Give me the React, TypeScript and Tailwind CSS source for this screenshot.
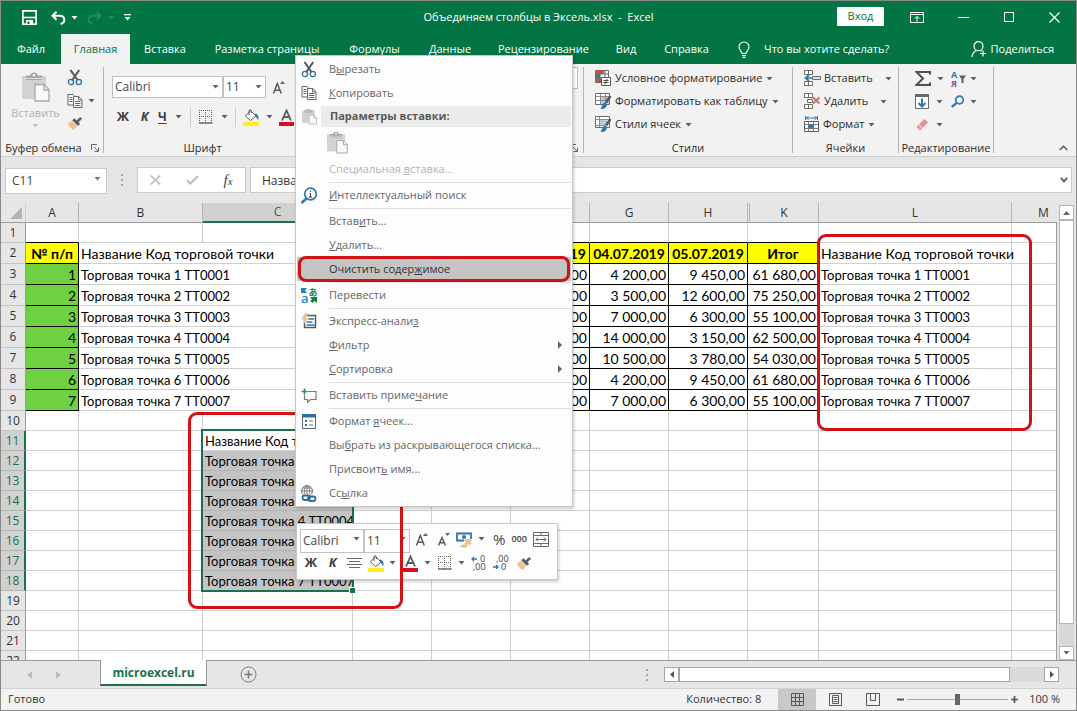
import React from "react";

const Caret = ({ className = "text-[#5f5f5f]" }: { className?: string }) => (
  <svg width="7" height="4" viewBox="0 0 7 4" className={"shrink-0 " + className} fill="currentColor" aria-hidden="true">
    <path d="M0.5 0h6L3.5 3.6z" />
  </svg>
);

const Scissors = () => (
  <svg width="16" height="17" viewBox="0 0 16 17" fill="none" aria-hidden="true">
    <path d="M3.500 1 10.800 11.500M12.200 1 5 11.500" stroke="#5a5a5a" strokeWidth="2.100" />
    <circle cx="4" cy="13" r="2.600" stroke="#2e75a0" strokeWidth="1.300" />
    <circle cx="11.800" cy="13" r="2.600" stroke="#2e75a0" strokeWidth="1.300" />
  </svg>
);

const CopyIcon = () => (
  <svg width="16" height="16" viewBox="0 0 16 16" aria-hidden="true">
    <path d="M1 1.500h5l2.500 2.500v8H1z" fill="#fff" stroke="#5a6670" />
    <path d="M2.500 4.500h3M2.500 6.500h3M2.500 8.500h3" stroke="#2e75a0" />
    <path d="M6.500 3.500h5.200l3.300 3.300v7.700H6.500z" fill="#fff" stroke="#5a6670" />
    <path d="M11.500 3.500v3.400h3.400" fill="none" stroke="#5a6670" />
    <path d="M8 8.500h5.500M8 10.500h5.500M8 12.500h5.500" stroke="#2e75a0" />
  </svg>
);

const PasteIcon = ({ width, height }: { width: number; height: number }) => (
  <svg width={width} height={height} viewBox="0 0 28 30" aria-hidden="true">
    <path d="M0 4h24v23H0z" fill="#d3d1d2" />
    <path d="M4 8V3.500h4C8.500 1.500 10 .5 12 .5s3.500 1 4 3h4V8z" fill="#a8a6a7" />
    <circle cx="12" cy="3.300" r="1.300" fill="#f3f2f2" />
    <path d="M4 6.500h16" stroke="#f3f2f2" strokeWidth=".8" />
    <path d="M13 12.500h9l5 5V29H13z" fill="#fbfafb" stroke="#aaa8a9" strokeWidth="1.300" />
    <path d="M22 12.500V18h5" fill="none" stroke="#aaa8a9" strokeWidth="1.300" />
  </svg>
);

const Brush = () => (
  <svg width="16" height="15" viewBox="0 0 17 15" aria-hidden="true">
    <path d="m1 7.500 4-3 5.500 5.500-3 4.500C5.500 14 2 11 1 7.500z" fill="#f3c08a" />
    <path d="M5.500 4 8 2l6 6-2.500 2z" fill="#5a5a5a" />
    <path d="M10.500 4.500 14 1l1.500 1.500L12 6z" fill="#5a5a5a" stroke="#5a5a5a" />
  </svg>
);

const Borders = () => (
  <svg width="14" height="14" viewBox="0 0 14 14" fill="none" stroke="#5f5f5f" aria-hidden="true">
    <path d="M0 .5h13M0 6.500h13M.5 0v13M6.500 0v13M12.500 0v13" strokeDasharray="1 1" />
    <path d="M0 13h13.500" strokeWidth="1.400" />
  </svg>
);

const Bucket = () => (
  <svg width="17" height="17" viewBox="0 0 17 17" aria-hidden="true">
    <path d="M0 13h16v4H0z" fill="#ffee1a" />
    <path d="M7.500 1.500 13 7l-5.500 4.500L2.500 7z" fill="#fff" stroke="#5a5a5a" />
    <path d="M6 6V1.500q1.200-1.500 2.400 0V4" fill="none" stroke="#5a5a5a" />
    <path d="M12 4.500c3 .5 4 3 3.300 6.500-1.500-1-1.500-3-3-3.500z" fill="#2e75a0" />
  </svg>
);

const FontColor = () => (
  <svg width="15" height="17" viewBox="0 0 15 17" aria-hidden="true">
    <path d="M3 11.500 7.500 1.500 12 11.500M4.600 8h5.800" fill="none" stroke="#5a5a5a" strokeWidth="1.800" />
    <path d="M0 13h15v4H0z" fill="#d8101c" />
  </svg>
);

const GrowFont = ({ down = false }: { down?: boolean }) => (
  <svg width="14" height="15" viewBox="0 0 14 15" aria-hidden="true">
    <path d={down ? "M1.500 13.500 5 5.500l3.500 8M3 10.800h4" : "M1.500 13.500 5.300 3.500l4 10M2.900 10.300h5"} fill="none" stroke="#5a5a5a" strokeWidth="1.500" />
    <path d={down ? "M8 1h5l-2.500 3z" : "M8 4h5L10.500 1z"} fill="#2e75a0" />
  </svg>
);

const Launcher = () => (
  <svg width="8" height="8" viewBox="0 0 8 8" fill="none" stroke="#6a6a6a" aria-hidden="true">
    <path d="M.5 6V.5H6M3 3l4 4M7.500 3.500v4h-4" />
  </svg>
);

const CondIcon = () => (
  <svg width="17" height="17" viewBox="0 0 17 17" aria-hidden="true">
    <path d="M.5.5h13v12H.5z" fill="#fff" stroke="#6a6a6a" />
    <path d="M0 0h9v4H0z" fill="#c4563c" /><path d="M0 4h5v4H0z" fill="#3f78a8" /><path d="M0 8h8v4H0z" fill="#c4563c" />
    <path d="M0 4h14M0 8h14M5 0v13M10 0v13" stroke="#6a6a6a" />
    <path d="M6.500 7.500h9v8h-9z" fill="#fff" stroke="#5a5a5a" />
    <path d="M8.500 10.500h5M8.500 12.500h5M12.300 9l-2.600 5.300" stroke="#4a4a4a" fill="none" />
  </svg>
);

const TableIcon = ({ styles = false }: { styles?: boolean }) => (
  <svg width="17" height="17" viewBox="0 0 17 17" aria-hidden="true">
    <path d="M.5.5h14v11H.5z" fill="#fff" stroke="#6a6a6a" />
    <path d={styles ? "M5 4h7v5H5z" : "M6 4h8v7H6z"} fill="#b9cbdb" />
    <path d={styles ? "M.5 3.500h14M4.500 1v10M.5 9.500h9" : "M.5 3.500h14M.5 7.500h14M5.500 1v10M10.500 1v10"} stroke="#8a8a8a" fill="none" />
    <path d="M15.500 3 11 9.500" stroke="#5a5a5a" strokeWidth="2.600" />
    <path d="M5.500 16c1.500-1 1-5.500 4.500-6.500 2.500.5 2.500 3 1 4.700-1.500 1.600-3.500 2.100-5.500 1.800z" fill="#2e78ae" />
  </svg>
);

const CellsIcon = ({ kind }: { kind: "insert" | "delete" }) => (
  <svg width="17" height="17" viewBox="0 0 17 17" aria-hidden="true">
    <path d="M.5.500h8v4h-8zM4.500.5v4M.5 11.500h8v4h-8zM4.500 11.500v4" fill="#fff" stroke="#6a6a6a" />
    {kind === "insert" ? (
      <>
        <path d="M8.500 6.500h8v3h-8z" fill="#d7e3ee" stroke="#6a6a6a" />
        <path d="M8 8H2m3-3L1.500 8 5 11" fill="none" stroke="#2e78ae" strokeWidth="1.700" />
      </>
    ) : (
      <>
        <path d="M3.500 6.500h5v3h-5z" fill="#fff" stroke="#6a6a6a" />
        <path d="m9 4.500 6.500 6M15.500 4.500 9 10.500" stroke="#dd6a56" strokeWidth="1.800" />
      </>
    )}
  </svg>
);

const FormatIcon = () => (
  <svg width="16" height="17" viewBox="0 0 16 17" aria-hidden="true">
    <path d="M1.500 0v4M13.500 0v4M2 2h11M4.500.5 2.500 2l2 1.500M10.500.5l2 1.500-2 1.500" stroke="#2e78ae" fill="none" />
    <path d="M.5 5.500h14v10H.5z" fill="#fff" stroke="#5a5a5a" />
    <path d="M.5 8.500h14M.5 12.500h14M4.500 5.500v10M9.500 5.500v10" stroke="#7a7a7a" />
    <path d="M4.500 8.500h5v4h-5z" fill="#2e78ae" />
  </svg>
);

const Find = () => (
  <svg width="14" height="13" viewBox="0 0 14 13" fill="none" stroke="#2e78ae" aria-hidden="true">
    <circle cx="8.500" cy="5" r="3.800" strokeWidth="1.700" />
    <path d="m5.800 7.800-5 4" strokeWidth="2.300" />
  </svg>
);

const RibbonButton = ({ icon, label, gap = "gap-[4px]" }: { icon: React.ReactNode; label: string; gap?: string }) => (
  <button className={"flex h-[23px] items-center whitespace-nowrap text-[#2b2b2b] " + gap}>
    <span className="flex items-center gap-[3px]">{icon}{label}</span>
    <Caret />
  </button>
);

const GroupLabel = ({ children }: { children: React.ReactNode }) => (
  <div className="mt-auto flex h-[10px] items-center justify-center text-[11px] leading-[10px] whitespace-nowrap text-[#2b2b2b]">{children}</div>
);

const RibbonGroup = ({ className, children }: { className: string; children: React.ReactNode }) => (
  <section className={"my-[3px] flex shrink-0 flex-col border-r border-[#b5b4b4] " + className}>{children}</section>
);

const tabs: [string, string][] = [
  ["Файл", "w-[60px]"],
  ["Главная", "w-[69px]"],
  ["Вставка", "w-[70px]"],
  ["Разметка страницы", "w-[134px]"],
  ["Формулы", "w-[81px]"],
  ["Данные", "w-[70px]"],
  ["Рецензирование", "w-[117px]"],
  ["Вид", "w-[48px]"],
  ["Справка", "w-[73px]"],
];

const TitleBar = () => (
  <header className="grid h-[33px] grid-cols-[1fr_auto_1fr] items-center bg-[#037444] text-white">
    <div className="flex items-center pl-[21px]">
      <button aria-label="Сохранить">
        <svg width="15" height="15" viewBox="0 0 15 15" fill="none" aria-hidden="true">
          <path d="M.9.9h13.200v13.200H.9z" stroke="#fff" strokeWidth="1.700" />
          <path d="M1 7.500h13" stroke="#fff" strokeWidth="1.600" />
          <path d="M4 10h7v4H4z" fill="#fff" /><path d="M5.500 11.500h2v2.500h-2z" fill="#037444" />
        </svg>
      </button>
      <button aria-label="Отменить" className="ml-[14px] flex items-center gap-[5px]">
        <svg width="15" height="14" viewBox="0 0 15 14" fill="none" stroke="#fff" strokeWidth="2" aria-hidden="true">
          <path d="M5.500.8 1.500 4.800l4 4M2 4.800h6.500c3 0 4.800 1.700 4.800 4s-1.500 3.700-3.800 4.200" />
        </svg>
        <Caret className="text-white" />
      </button>
      <button aria-label="Вернуть" className="ml-[9px] flex items-center gap-[6px] text-[#1f8c60]">
        <svg width="15" height="14" viewBox="0 0 15 14" fill="none" stroke="currentColor" strokeWidth="2" aria-hidden="true">
          <path d="m9.500.8 4 4-4 4M13 4.800H6.500c-3 0-4.800 1.700-4.800 4s1.500 3.700 3.800 4.200" />
        </svg>
        <Caret className="text-[#1f8c60]" />
      </button>
      <button aria-label="Настройка панели" className="ml-[9px]">
        <svg width="7" height="7" viewBox="0 0 7 7" fill="#fff" aria-hidden="true"><path d="M0 0h7v1.300H0zM.5 3h6L3.500 6.600z" /></svg>
      </button>
    </div>
    <h1 className="text-[11px] whitespace-pre">Объединяем столбцы в Эксель.xlsx  -  Excel</h1>
    <div className="flex items-center justify-end">
      <button className="mr-[10px] mb-[3px] h-[19px] w-[47px] rounded-[1px] bg-white text-[11px] leading-[18px] text-[#037444]">Вход</button>
      <button aria-label="Параметры ленты" className="flex w-[46px] justify-center">
        <svg width="14" height="11" viewBox="0 0 14 11" fill="none" stroke="#fff" aria-hidden="true"><path d="M.5.5h13v10H.5zM.5 2.500h13M7 9.500V5M4.800 6.500 7 4.300l2.200 2.200" /></svg>
      </button>
      <button aria-label="Свернуть" className="flex w-[46px] justify-center">
        <svg width="11" height="11" viewBox="0 0 11 11" stroke="#fff" aria-hidden="true"><path d="M0 5.500h11" /></svg>
      </button>
      <button aria-label="Развернуть" className="flex w-[46px] justify-center">
        <svg width="11" height="11" viewBox="0 0 11 11" fill="none" stroke="#fff" aria-hidden="true"><path d="M.5.5h9v9h-9z" /></svg>
      </button>
      <button aria-label="Закрыть" className="flex w-[44px] justify-center">
        <svg width="11" height="11" viewBox="0 0 11 11" stroke="#fff" strokeWidth="1.200" aria-hidden="true"><path d="m.5.5 10 10M10.500.5l-10 10" /></svg>
      </button>
    </div>
  </header>
);

const Tabs = () => (
  <nav className="flex h-[30px] items-stretch bg-[#037444] text-[11px] text-white">
    {tabs.map(([name, width]) => (
      <button key={name} className={"shrink-0 text-center whitespace-nowrap " + width + (name === "Главная" ? " bg-[#f3f2f2] text-[#037444]" : "")}>
        {name}
      </button>
    ))}
    <button className="ml-[15px] flex items-center gap-[14px] whitespace-nowrap">
      <svg width="12" height="17" viewBox="0 0 12 17" fill="none" stroke="#fff" strokeWidth="1.100" aria-hidden="true">
        <path d="M4 12.500c0-2-3-3.300-3-6.500a5 5 0 0 1 10 0c0 3.200-3 4.500-3 6.500zM4 14.500h4M4.500 16.400h3" />
      </svg>
      Что вы хотите сделать?
    </button>
    <button className="mr-[22px] ml-auto flex items-center gap-[4px] whitespace-nowrap">
      <svg width="16" height="16" viewBox="0 0 16 16" fill="none" stroke="#fff" strokeWidth="1.200" aria-hidden="true">
        <circle cx="7.500" cy="5.200" r="4.500" />
        <path d="M1 16c0-3 1.800-5 4.300-6.500M9.700 9.500l1 .8M12 9.500v6M9 12.500h6" />
      </svg>
      Поделиться
    </button>
  </nav>
);

const Combo = ({ label, value, width }: { label: string; value: string; width: string }) => (
  <div className={"relative h-full " + width}>
    <select aria-label={label} className="h-full w-full appearance-none border border-[#c2c1c2] bg-white pl-[2px] text-[12px] text-[#444] outline-none">
      <option>{value}</option>
    </select>
    <span className="pointer-events-none absolute top-1/2 right-[4px] -translate-y-1/2"><Caret /></span>
  </div>
);

const Ribbon = () => (
  <div className="flex h-[93px] shrink-0 border-b border-[#cfcece] bg-[#f3f2f2] text-[11px]">
    <RibbonGroup className="w-[103px]">
      <div className="flex">
        <button className="flex w-[66px] flex-col items-center pt-[5px] pl-[3px] text-[#b1b0b0]">
          <PasteIcon width={28} height={30} />
          <span className="leading-[22px]">Вставить</span>
          <Caret className="text-[#c4c3c3]" />
        </button>
        <div className="flex flex-col items-start gap-[7px] pt-[2px] pl-[-3px]">
          <button aria-label="Вырезать"><Scissors /></button>
          <button aria-label="Копировать" className="flex items-center gap-[5px]"><CopyIcon /><Caret /></button>
          <button aria-label="Формат по образцу"><Brush /></button>
        </div>
      </div>
      <GroupLabel><span className="mr-[9px]">Буфер обмена</span><Launcher /></GroupLabel>
    </RibbonGroup>
    <RibbonGroup className="w-[197px] border-r-0 pl-[8px]">
      <div className="mt-[9px] flex h-[22px] items-center">
        <Combo label="Шрифт" value="Calibri" width="w-[111px]" />
        <Combo label="Размер шрифта" value="11" width="w-[43px]" />
        <button aria-label="Увеличить размер шрифта" className="ml-[6px]"><GrowFont /></button>
      </div>
      <div className="mt-[9px] flex h-[20px] items-center text-[#3f3f3f]">
        <button className="w-[22px] text-[13px] font-bold">Ж</button>
        <button className="w-[21px] text-[13px] font-bold italic">К</button>
        <button className="ml-[3px] flex items-center gap-[8px] text-[12px] font-bold"><span className="underline underline-offset-2">Ч</span><Caret /></button>
        <span className="mx-[8px] h-full w-px bg-[#cfcece]" />
        <button aria-label="Границы" className="flex items-center gap-[8px]"><Borders /><Caret /></button>
        <span className="mx-[7px] h-full w-px bg-[#cfcece]" />
        <button aria-label="Цвет заливки" className="flex items-center gap-[6px]"><Bucket /><Caret /></button>
        <button aria-label="Цвет текста" className="ml-[6px]"><FontColor /></button>
      </div>
      <div className="mt-auto pr-[8px]"><GroupLabel>Шрифт</GroupLabel></div>
    </RibbonGroup>
    <RibbonGroup className="w-[283px] items-end pr-[5px]">
      <div className="h-[22px] w-[100px] border border-[#c2c1c2] bg-white" />
      <GroupLabel><Launcher /></GroupLabel>
    </RibbonGroup>
    <RibbonGroup className="w-[209px]">
      <div className="pl-[11px]">
        <RibbonButton icon={<CondIcon />} label="Условное форматирование" />
        <RibbonButton icon={<TableIcon />} label="Форматировать как таблицу" />
        <RibbonButton icon={<TableIcon styles />} label="Стили ячеек" />
      </div>
      <GroupLabel>Стили</GroupLabel>
    </RibbonGroup>
    <RibbonGroup className="w-[106px]">
      <div className="pl-[11px]">
        <RibbonButton icon={<CellsIcon kind="insert" />} label="Вставить" gap="gap-[12px]" />
        <RibbonButton icon={<CellsIcon kind="delete" />} label="Удалить" gap="gap-[12px]" />
        <RibbonButton icon={<FormatIcon />} label="Формат" />
      </div>
      <GroupLabel>Ячейки</GroupLabel>
    </RibbonGroup>
    <RibbonGroup className="w-[95px]">
      <div className="grid grid-cols-[36px_auto] pl-[16px]">
        <button aria-label="Сумма" className="flex h-[23px] items-center gap-[6px]">
          <svg width="16" height="15" viewBox="0 0 16 15" aria-hidden="true"><path d="M15 3.500V1H1.500L8 7.500 1.500 14H15v-2.500" fill="none" stroke="#505050" strokeWidth="2" /></svg>
          <Caret />
        </button>
        <button aria-label="Сортировка и фильтр" className="flex h-[23px] items-center gap-[4px]">
          <svg width="15" height="18" viewBox="0 0 15 18" className="overflow-visible" aria-hidden="true">
            <text x="0" y="8" fontSize="9" fontWeight="700" fill="#2e78ae">А</text>
            <text x="0" y="17" fontSize="9" fontWeight="700" fill="#8e4ba0">Я</text>
            <path d="M8 5.500h7L12.500 9v4h-2V9z" fill="#5f5f5f" />
          </svg>
          <Caret />
        </button>
        <button aria-label="Заполнить" className="flex h-[23px] items-center gap-[6px]">
          <svg width="15" height="15" viewBox="0 0 15 15" aria-hidden="true">
            <path d="M.5.5h13v14H.5z" fill="#fff" stroke="#6a6a6a" /><path d="M0 0h14v3H0z" fill="#6a6a6a" />
            <path d="M7 4.500v8M3.500 9 7 12.500 10.500 9" fill="none" stroke="#2e78ae" strokeWidth="2" />
          </svg>
          <Caret />
        </button>
        <button aria-label="Найти и выделить" className="flex h-[23px] items-center gap-[5px]"><Find /><Caret /></button>
        <button aria-label="Очистить" className="flex h-[23px] items-center gap-[6px]">
          <svg width="15" height="13" viewBox="0 0 15 13" aria-hidden="true">
            <path d="m1.500 9 7.800-8 3.700 3.500-8 8z" fill="#ee8a9a" /><path d="m3.800 6.600 3.700 3.500" stroke="#fff" />
          </svg>
          <Caret />
        </button>
      </div>
      <GroupLabel>Редактирование</GroupLabel>
    </RibbonGroup>
    <button aria-label="Свернуть ленту" className="mt-auto mr-[8px] mb-[5px] ml-auto">
      <svg width="9" height="6" viewBox="0 0 9 6" fill="none" stroke="#5a5a5a" strokeWidth="1.500" aria-hidden="true"><path d="m.7 5 3.800-3.800L8.300 5" /></svg>
    </button>
  </div>
);

const Dots = () => (
  <svg width="3" height="12" viewBox="0 0 3 12" fill="#a9a8a9" aria-hidden="true"><path d="M0 0h2v2H0zM0 5h2v2H0zM0 10h2v2H0z" /></svg>
);

const FormulaBar = () => (
  <div className="flex h-[46px] shrink-0 items-center bg-[#e7e6e7] pr-[4px] pl-[4px]">
    <div className="relative h-[26px] w-[102px]">
      <select aria-label="Имя ячейки" className="h-full w-full appearance-none border border-[#cbcacb] bg-white pl-[6px] text-[12px] text-[#444] outline-none">
        <option>C11</option>
      </select>
      <span className="pointer-events-none absolute top-[10px] right-[6px]"><Caret className="text-[#777]" /></span>
    </div>
    <span className="ml-[14px]"><Dots /></span>
    <div className="ml-[13px] flex h-[26px] w-[109px] items-center justify-around border border-[#cbcacb] bg-white">
      <button aria-label="Отмена"><svg width="11" height="10" viewBox="0 0 11 10" stroke="#bdbcbd" strokeWidth="1.700" aria-hidden="true"><path d="m.7.7 9.500 8.600M10.200.7.700 9.300" /></svg></button>
      <button aria-label="Ввод"><svg width="13" height="10" viewBox="0 0 13 10" fill="none" stroke="#bdbcbd" strokeWidth="2.200" aria-hidden="true"><path d="m1 5.500 3.500 3L12 1" /></svg></button>
      <button aria-label="Вставить функцию" className="font-['Liberation_Serif',serif] text-[15px] leading-none text-[#444] italic">f<span className="text-[11px]">x</span></button>
    </div>
    <input aria-label="Строка формул" defaultValue="Название Код торговой точки" className="ml-[4px] h-[26px] min-w-0 flex-1 border border-r-0 border-[#cbcacb] bg-white pl-[11px] text-[12px] text-[#333] outline-none" />
    <button aria-label="Развернуть строку формул" className="flex h-[26px] w-[16px] items-center justify-center border border-l-0 border-[#cbcacb] bg-white">
      <svg width="8" height="6" viewBox="0 0 8 6" fill="none" stroke="#5a5a5a" strokeWidth="1.800" aria-hidden="true"><path d="m.8.8 3.200 3.500L7.200.8" /></svg>
    </button>
  </div>
);

const rows: [string, string, string, string][] = [
  ["4 200,00", "4 200,00", "9 450,00", "61 680,00"],
  ["3 500,00", "3 500,00", "12 600,00", "75 250,00"],
  ["7 000,00", "7 000,00", "6 300,00", "55 100,00"],
  ["14 000,00", "14 000,00", "3 150,00", "62 500,00"],
  ["10 500,00", "10 500,00", "3 780,00", "54 030,00"],
  ["4 200,00", "4 200,00", "9 450,00", "61 680,00"],
  ["7 000,00", "7 000,00", "6 300,00", "55 100,00"],
];
const columns = ["A", "B", "C", "D", "E", "F", "G", "H", "K", "L", "M"];
const dates = ["03.07.2019", "04.07.2019", "05.07.2019", "Итог"];
const heading = "Название Код торговой точки";
const point = (n: number) => `Торговая точка ${n} ТТ000${n}`;

const cellFor = (col: string, row: number): { text: string; style: string } => {
  const grid = "border-[#cfcfcf]";
  const edge = col === "M" ? "border-r-[#9a9a9a] border-b-[#cfcfcf]" : grid;
  const inData = row >= 2 && row <= 9;
  const valueIndex = ["F", "G", "H", "K"].indexOf(col);
  const name = row === 2 ? heading : point(row - 2);
  const size = row === 2 ? " text-[14px]" : " text-[13px]";
  if (row === 1 && (col === "A" || valueIndex >= 0)) return { text: "", style: "border-r-[#cfcfcf] border-b-black" };
  if (inData && col === "A")
    return row === 2
      ? { text: "№ п/п", style: "border-black bg-[#ffff00] pt-[2px] text-center font-bold" }
      : { text: String(row - 2), style: "border-black bg-[#6fd043] pt-[2px] text-right pr-[2px]" };
  if (inData && valueIndex >= 0)
    return row === 2
      ? { text: dates[valueIndex], style: "border-black bg-[#ffff00] pt-[2px] text-center font-bold" }
      : { text: rows[row - 3][valueIndex], style: "border-black pt-[2px] text-right pr-[2px]" };
  if (inData && col === "B") return { text: name, style: "border-b-[#cfcfcf] border-r-transparent pt-[2px] pl-[2px] overflow-visible" + size };
  if (inData && col === "L") return { text: name, style: grid + " pt-[2px] pl-[2px]" + size };
  if (col === "C" && row === 11) return { text: heading, style: "border-[#cfcfcf] bg-white pl-[2px] overflow-hidden text-[13px]" };
  if (col === "C" && row > 11 && row < 19) return { text: point(row - 11), style: "border-r-[#c5c4c5] border-b-[#b3b2b3] bg-[#c5c4c5] pl-[2px] overflow-hidden text-[13px]" };
  return { text: "", style: edge };
};

const headStyle = (c: string) => {
  if (c === "C") return "border-r border-b-2 border-r-[#b5b4b5] border-b-[#1b7047] bg-[#d2d1d2] text-[#1b7047]";
  if (c === "M") return "border-b border-b-[#9a9a9a] pl-[18px]";
  return "border-r border-b border-r-[#b5b4b5] border-b-[#9a9a9a]";
};

const Sheet = () => (
  <main className="flex min-h-0 flex-1 bg-[#e7e6e7]">
    <div className="relative min-w-0 flex-1 overflow-hidden">
      <table className="w-full table-fixed border-separate border-spacing-0 bg-white font-['Lato','Open_Sans',sans-serif] text-[14px] leading-[16px] text-black">
        <colgroup>
          <col className="w-[25px]" /><col className="w-[53px]" /><col className="w-[124px]" /><col className="w-[150px]" />
          <col className="w-[79px]" /><col className="w-[79px]" /><col className="w-[79px]" /><col className="w-[79px]" />
          <col className="w-[79px]" /><col className="w-[71px]" /><col className="w-[193px]" /><col />
        </colgroup>
        <thead>
          <tr className="h-[20px] bg-[#e7e6e7] font-['Open_Sans',sans-serif] text-[12px] text-[#333]">
            <th aria-label="Выделить всё" className="border-r border-b border-r-[#cfcfcf] border-b-[#9a9a9a]">
              <svg width="12" height="12" viewBox="0 0 12 12" fill="#b5b4b5" className="mr-[3px] ml-auto" aria-hidden="true"><path d="M12 0v12H0z" /></svg>
            </th>
            {columns.map((c) => (
              <th key={c} scope="col" className={"font-normal " + headStyle(c)}>
                {c === "K" ? <span className="ml-px block border-l border-[#b5b4b5] leading-[18px]">K</span> : c}
              </th>
            ))}
          </tr>
        </thead>
        <tbody>
          {Array.from({ length: 22 }, (_, i) => i + 1).map((row) => {
            const selected = row >= 11 && row <= 18;
            return (
              <tr key={row} className={row >= 2 && row <= 9 ? "h-[21px]" : "h-[20px]"}>
                <th scope="row" className={"border-b text-center font-['Open_Sans',sans-serif] text-[12px] font-normal " + (selected ? "border-r-2 border-r-[#1b7047] border-b-[#b5b4b5] bg-[#d2d1d2] text-[#1b7047]" : "border-r border-r-[#9a9a9a] border-b-[#c5c4c5] bg-[#e7e6e7] text-[#333]")}>
                  {row}
                </th>
                {columns.map((c) => {
                  const cell = cellFor(c, row);
                  return (
                    <td key={c} className={"border-r border-b whitespace-nowrap " + cell.style}>{cell.text}</td>
                  );
                })}
              </tr>
            );
          })}
        </tbody>
      </table>
      <div className="pointer-events-none absolute top-[226px] left-[200px] h-[163px] w-[153px] border-2 border-[#1b7047]">
        <span className="absolute -right-[3px] -bottom-[3px] h-[6px] w-[6px] border-t border-l border-white bg-[#1b7047]" />
      </div>
    </div>
    <div className="flex w-[19px] flex-col items-center pt-[2px]">
      <button aria-label="Прокрутить вверх" className="flex h-[15px] w-[15px] shrink-0 items-center justify-center border border-[#b5b4b5] bg-white">
        <svg width="7" height="4" viewBox="0 0 7 4" fill="#666" aria-hidden="true"><path d="M0 4h7L3.500 0z" /></svg>
      </button>
      <div className="flex w-[15px] flex-1 flex-col bg-[#d9d8d9]">
        <div className="mb-[22px] flex-1 border border-[#b5b4b5] bg-white" />
      </div>
      <button aria-label="Прокрутить вниз" className="flex h-[14px] w-[15px] shrink-0 items-center justify-center border border-[#b5b4b5] bg-white">
        <Caret />
      </button>
    </div>
  </main>
);

const SheetTabs = () => (
  <div className="flex h-[28px] shrink-0 items-start bg-[#e7e6e7]">
    <div className="flex h-full w-[99px] items-center gap-[24px] border-t border-[#9a9a9a] pl-[26px]">
      <button aria-label="Предыдущий лист"><svg width="5" height="8" viewBox="0 0 5 8" fill="#bdbcbd" aria-hidden="true"><path d="M5 0v8L0 4z" /></svg></button>
      <button aria-label="Следующий лист"><svg width="5" height="8" viewBox="0 0 5 8" fill="#bdbcbd" aria-hidden="true"><path d="M0 0v8l5-4z" /></svg></button>
    </div>
    <button className="h-[26px] w-[107px] border-x border-b-2 border-x-[#9a9a9a] border-b-[#1b7047] bg-white pt-px text-[12px] font-bold text-[#1b7047]">microexcel.ru</button>
    <div className="flex h-full min-w-0 flex-1 items-center border-t border-[#9a9a9a] pr-[17px] pl-[33px]">
      <button aria-label="Новый лист">
        <svg width="17" height="17" viewBox="0 0 17 17" fill="none" stroke="#7a7a7a" aria-hidden="true"><circle cx="8.500" cy="8.500" r="7.500" /><path d="M8.500 4.500v8M4.500 8.500h8" strokeWidth="1.600" /></svg>
      </button>
      <span className="ml-auto"><Dots /></span>
      <div className="ml-[15px] flex h-[15px] w-[395px] bg-[#dbdadb]">
        <button aria-label="Прокрутить влево" className="flex w-[15px] items-center justify-center border border-[#a5a4a5] bg-white"><svg width="4" height="7" viewBox="0 0 4 7" fill="#555" aria-hidden="true"><path d="M4 0v7L0 3.500z" /></svg></button>
        <div className="flex-1 border border-[#a5a4a5] bg-white" />
        <div className="w-[34px]" />
        <button aria-label="Прокрутить вправо" className="flex w-[15px] items-center justify-center border border-[#a5a4a5] bg-white"><svg width="4" height="7" viewBox="0 0 4 7" fill="#555" aria-hidden="true"><path d="M0 0v7l4-3.500z" /></svg></button>
      </div>
    </div>
  </div>
);

const StatusBar = () => (
  <footer className="flex h-[22px] shrink-0 items-center border-t border-[#d2d1d2] bg-[#f3f2f2] pr-[16px] pl-[7px] text-[11px] text-[#333]">
    <span>Готово</span>
    <span className="ml-auto">Количество: 8</span>
    <div className="ml-[17px] flex h-full text-[#5a5a5a]">
      <button aria-label="Обычный" className="flex h-full w-[38px] items-center justify-center bg-[#c9c8c9]">
        <svg width="13" height="13" viewBox="0 0 13 13" fill="none" stroke="currentColor" aria-hidden="true"><path d="M.5.5h12v12H.5zM.5 4.500h12M.5 8.500h12M4.500.5v12M8.500.5v12" /></svg>
      </button>
      <button aria-label="Разметка страницы" className="flex h-full w-[38px] items-center justify-center">
        <svg width="13" height="13" viewBox="0 0 13 13" fill="none" stroke="currentColor" aria-hidden="true"><path d="M.5.5h12v12H.5zM3.500 2.500h6v8h-6zM4.500 4.500h4M4.500 6.500h4M4.500 8.500h4" /></svg>
      </button>
      <button aria-label="Страничный режим" className="flex h-full w-[38px] items-center justify-center">
        <svg width="14" height="13" viewBox="0 0 14 13" fill="none" stroke="currentColor" aria-hidden="true"><path d="M.5.5h13v12H.5zM4.500.5v7h5v-7" /></svg>
      </button>
    </div>
    <button aria-label="Уменьшить" className="ml-[5px]"><svg width="7" height="7" viewBox="0 0 7 7" stroke="#555" strokeWidth="2" aria-hidden="true"><path d="M0 3.500h7" /></svg></button>
    <input type="range" aria-label="Масштаб" min={0} max={200} defaultValue={100} className="mx-[3px] h-[13px] w-[101px] appearance-none bg-[linear-gradient(#a5a4a5,#a5a4a5)] bg-[length:100%_1px] bg-center bg-no-repeat [&::-webkit-slider-thumb]:h-[11px] [&::-webkit-slider-thumb]:w-[5px] [&::-webkit-slider-thumb]:appearance-none [&::-webkit-slider-thumb]:bg-[#666]" />
    <button aria-label="Увеличить"><svg width="7" height="7" viewBox="0 0 7 7" stroke="#555" strokeWidth="1.700" aria-hidden="true"><path d="M0 3.500h7M3.500 0v7" /></svg></button>
    <span className="ml-[11px]">100 %</span>
  </footer>
);

const InfoFind = () => (
  <svg width="17" height="17" viewBox="0 0 17 17" fill="none" stroke="#2e78ae" aria-hidden="true">
    <circle cx="9.500" cy="7" r="5.800" strokeWidth="1.700" /><path d="m5.500 11.500-5 4.500" strokeWidth="2.500" />
    <path d="M9.500 3.500v1.500M8.500 6.500h1v3.500M8 10.200h3" stroke="#555" strokeWidth="1.200" />
  </svg>
);
const TranslateIcon = () => (
  <svg width="17" height="17" viewBox="0 0 17 17" className="overflow-visible" aria-hidden="true">
    <path d="M0 1h6L4 3.500l2 2.500H0z" fill="#2a7fc0" />
    <text x="0" y="16" fontSize="13" fontWeight="600" fill="#1b8ac5">a</text>
    <text x="7.500" y="8.500" fontSize="9" fontWeight="700" fill="#2d8a3e">あ</text>
    <path d="M9 10h7v6l-2.500-2-2 2L9 14l2-1.500z" fill="#1d7d3b" />
  </svg>
);
const QuickIcon = () => (
  <svg width="16" height="16" viewBox="0 0 16 16" aria-hidden="true">
    <path d="M3.500 2.500h11v12h-11z" fill="#fff" stroke="#5a5a5a" strokeWidth="1.500" />
    <path d="M7 6h6M5.500 9h6M5.500 12h8" stroke="#2e78ae" strokeWidth="1.600" />
    <path d="M4.500 0 0 6.500h3L1.500 12 7.500 5H4.500L7.500 0z" fill="#f3b873" stroke="#fdfdfd" strokeWidth=".4" />
  </svg>
);
const CommentIcon = () => (
  <svg width="16" height="15" viewBox="0 0 16 15" fill="none" aria-hidden="true">
    <path d="M7 3.500h8v8H9.500l-3 2.800V11.500h-3V7" stroke="#7a7a7a" strokeWidth="1.200" /><path d="M3.500.5v6M.5 3.500h6" stroke="#2f8f63" strokeWidth="1.600" />
  </svg>
);
const FormatCells = () => (
  <svg width="14" height="15" viewBox="0 0 14 15" aria-hidden="true">
    <path d="M.5.500h13v14H.5z" fill="#fff" stroke="#5a6670" /><path d="M0 0h14v3.500H0z" fill="#2e6f9e" />
    <path d="M3 6h2v2H3zM3 10h2v2H3zM7 6.500h4v1H7zM7 10.500h4v1H7z" fill="#5a6670" />
  </svg>
);
const LinkIcon = () => (
  <svg width="16" height="17" viewBox="0 0 16 17" fill="none" aria-hidden="true">
    <circle cx="6" cy="6" r="5.400" stroke="#6a6a6a" /><path d="M.8 6h10.400M6 .6v10.800M2 3h8M6 .6c-3.600 3-3.600 7.800 0 10.800M6 .6c3.600 3 3.600 7.800 0 10.800" stroke="#6a6a6a" strokeWidth=".8" />
    <path d="M0 9.500h16V17H0z" fill="#fff" />
    <rect x="1.500" y="10.500" width="7.500" height="4.500" rx="2.200" stroke="#2e6f9e" strokeWidth="1.800" /><rect x="7" y="11.500" width="7.500" height="4.500" rx="2.200" stroke="#2e6f9e" strokeWidth="1.800" />
  </svg>
);

type Item = { before: string; key?: string; after?: string; icon?: React.ReactNode; kind?: "disabled" | "hot" | "sub"; line?: boolean };
const topItems: Item[] = [
  { before: "В", key: "ы", after: "резать", icon: <Scissors /> },
  { before: "", key: "К", after: "опировать", icon: <CopyIcon /> },
];
const items: Item[] = [
  { before: "Специальная ", key: "в", after: "ставка...", kind: "disabled", line: true },
  { before: "", key: "И", after: "нтеллектуальный поиск", icon: <InfoFind />, line: true },
  { before: "Встав", key: "и", after: "ть..." },
  { before: "", key: "У", after: "далить..." },
  { before: "Очистить содер", key: "ж", after: "имое", kind: "hot", line: true },
  { before: "Перевести", icon: <TranslateIcon />, line: true },
  { before: "Экспресс-анали", key: "з", icon: <QuickIcon /> },
  { before: "", key: "Ф", after: "ильтр", kind: "sub" },
  { before: "", key: "С", after: "ортировка", kind: "sub", line: true },
  { before: "Вставить приме", key: "ч", after: "ание", icon: <CommentIcon />, line: true },
  { before: "Формат ", key: "я", after: "чеек...", icon: <FormatCells /> },
  { before: "Вы", key: "б", after: "рать из раскрывающегося списка..." },
  { before: "Присвоит", key: "ь", after: " имя..." },
  { before: "Сс", key: "ы", after: "лка", icon: <LinkIcon /> },
];

const MenuRow = ({ item }: { item: Item }) => (
  <>
    <button role="menuitem" className={"relative flex h-[24px] w-full items-center text-left " + (item.kind === "disabled" ? "text-[#b5b4b5]" : item.kind === "hot" ? "bg-[#c5c4c5] text-[#333]" : "text-[#666]")}>
      <span className="flex w-[24px] shrink-0 justify-center">{item.icon}</span>
      <span className="ml-[8px] whitespace-pre">{item.before}<u>{item.key}</u>{item.after}</span>
      {item.kind === "sub" && (
        <svg width="4" height="8" viewBox="0 0 4 8" fill="#666" className="mr-[9px] ml-auto" aria-hidden="true"><path d="M0 0v8l4-4z" /></svg>
      )}
      {item.kind === "hot" && <span className="absolute inset-x-px -inset-y-px rounded-[8px] border-3 border-[#d01217]" />}
    </button>
    {item.line && <div className="mt-px ml-[32px] h-px bg-[#dedede]" />}
  </>
);

const ContextMenu = () => (
  <div role="menu" className="absolute top-[54px] left-[294px] z-30 w-[278px] border border-[#c9c8c9] bg-[#fdfdfd] p-px text-[11px] shadow-[1px_2px_3px_rgba(0,0,0,0.2)]">
    {topItems.map((item) => <MenuRow key={item.after} item={item} />)}
    <div className="flex h-[22px] items-center">
      <span className="flex w-[24px] justify-center"><PasteIcon width={15} height={17} /></span>
      <span className="flex h-[21px] flex-1 items-center bg-[#ebebeb] pl-[9px] font-bold text-[#5a5a5a]">Параметры вставки:</span>
    </div>
    <button aria-label="Вставить" className="ml-[30px] flex h-[30px] items-center"><PasteIcon width={21} height={23} /></button>
    {items.map((item) => <MenuRow key={item.before + item.after} item={item} />)}
  </div>
);

const Decimal = ({ more = false }: { more?: boolean }) => (
  <svg width="15" height="16" viewBox="0 0 15 16" className="overflow-visible" aria-hidden="true">
    <text x={more ? "9" : "3"} y="7" fontSize="9" fill="#444">{more ? "0" : ",00"}</text>
    <text x={more ? "2" : "8"} y="15" fontSize="9" fill="#444">{more ? ",00" : "0"}</text>
    <path d={more ? "M6 4H1m2-2L1 4l2 2" : "M0 12h5m-2-2 2 2-2 2"} fill="none" stroke="#2e78ae" strokeWidth="1.300" />
  </svg>
);

const MiniToolbar = () => (
  <div className="absolute top-[522px] left-[295px] z-10 w-[262px] border border-[#c9c8c9] bg-[#fdfdfd] pt-[3px] pb-[4px] pl-[3px] shadow-[1px_2px_3px_rgba(0,0,0,0.2)]">
    <div className="flex h-[24px] items-center">
      <Combo label="Шрифт" value="Calibri" width="w-[64px]" />
      <Combo label="Размер шрифта" value="11" width="w-[46px]" />
      <button aria-label="Увеличить размер шрифта" className="ml-[5px]"><GrowFont /></button>
      <button aria-label="Уменьшить размер шрифта" className="ml-[8px]"><GrowFont down /></button>
      <button aria-label="Финансовый числовой формат" className="ml-[5px] flex items-center gap-[5px]">
        <svg width="17" height="17" viewBox="0 0 17 17" aria-hidden="true">
          <path d="M1 2.500h14v7H1z" fill="#fff" stroke="#2e78ae" strokeWidth="1.800" /><circle cx="8" cy="6" r="2" fill="#2e78ae" />
          <path d="M8 8h8v3H8zM5 11h7v5H5z" fill="#fdfdfd" />
          <ellipse cx="12" cy="9.500" rx="3.500" ry="1.500" fill="#f0b97d" /><ellipse cx="12" cy="12.500" rx="3.500" ry="1.300" fill="#f0b97d" /><ellipse cx="8" cy="15" rx="3.500" ry="1.500" fill="#f0b97d" />
        </svg>
        <Caret />
      </button>
      <button className="ml-[8px] text-[15px] text-[#444]">%</button>
      <button className="ml-[6px] text-[9px] font-semibold text-[#444]">000</button>
      <button aria-label="Объединить" className="ml-[6px]">
        <svg width="16" height="15" viewBox="0 0 16 15" fill="none" stroke="#6a6a6a" aria-hidden="true">
          <path d="M.5.5h15v14H.5zM.5 3.500h15M.5 11.500h15M8 .5v3M8 11.500v3" /><path d="M3 7.500h10M5 5.500l-2 2 2 2M11 5.500l2 2-2 2" stroke="#2e78ae" />
        </svg>
      </button>
    </div>
    <div className="flex h-[24px] items-center text-[#3f3f3f]">
      <button className="w-[22px] text-[13px] font-bold">Ж</button>
      <button className="w-[21px] text-[13px] font-bold italic">К</button>
      <button aria-label="По центру" className="ml-[4px]">
        <svg width="15" height="11" viewBox="0 0 15 11" stroke="#6a6a6a" aria-hidden="true"><path d="M0 .5h15M2 3.500h11M0 6.500h15M2 9.500h11" /></svg>
      </button>
      <button aria-label="Цвет заливки" className="ml-[6px] flex items-center gap-[4px]"><Bucket /><Caret /></button>
      <button aria-label="Цвет текста" className="ml-[7px] flex items-center gap-[6px]"><FontColor /><Caret /></button>
      <button aria-label="Границы" className="ml-[7px] flex items-center gap-[6px]"><Borders /><Caret /></button>
      <button aria-label="Увеличить разрядность" className="ml-[6px]"><Decimal more /></button>
      <button aria-label="Уменьшить разрядность" className="ml-[7px]"><Decimal /></button>
      <button aria-label="Формат по образцу" className="ml-[8px]"><Brush /></button>
    </div>
  </div>
);

export default function App() {
  return (
    <div className="relative flex h-screen flex-col overflow-hidden border border-[#8a8a8a] font-['Open_Sans','Noto_Sans','Noto_Sans_CJK_JP',sans-serif]">
      <TitleBar />
      <Tabs />
      <Ribbon />
      <FormulaBar />
      <Sheet />
      <SheetTabs />
      <StatusBar />
      <MiniToolbar />
      <div className="pointer-events-none absolute top-[411px] left-[187px] z-20 h-[197px] w-[215px] rounded-[9px] border-3 border-[#d01217]" />
      <div className="pointer-events-none absolute top-[233px] left-[816px] z-20 h-[197px] w-[215px] rounded-[9px] border-3 border-[#d01217]" />
      <ContextMenu />
    </div>
  );
}
